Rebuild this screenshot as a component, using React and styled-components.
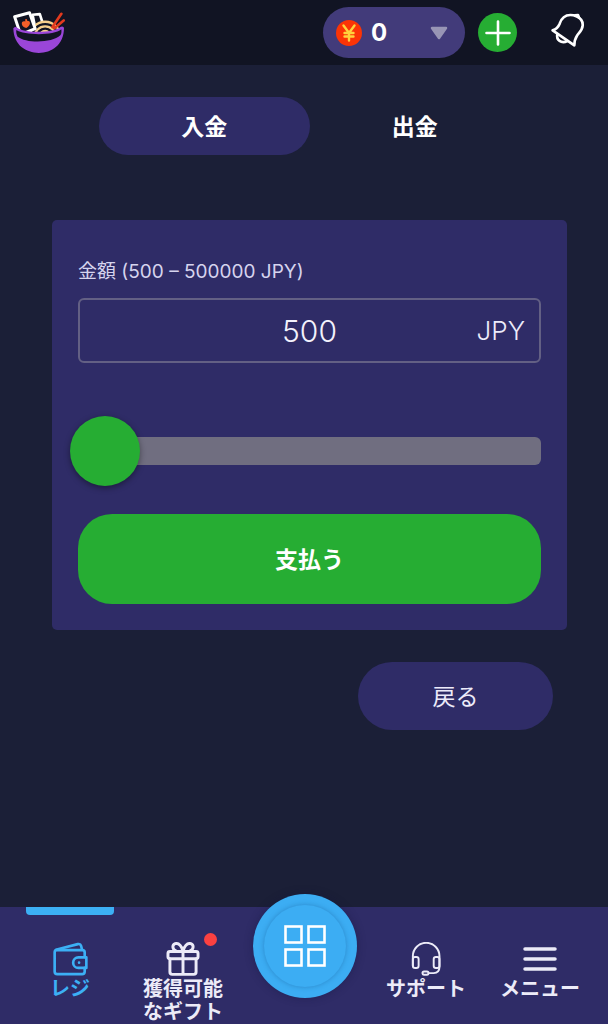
import React, { useState } from "react";
import styled, { createGlobalStyle, css } from "styled-components";

const GlobalStyle = createGlobalStyle`
  * {
    box-sizing: border-box;
  }

  body {
    margin: 0;
    background: #1b1f37;
    color: #ffffff;
    font-family: Inter, "Noto Sans CJK JP", sans-serif;
  }

  button,
  input {
    font-family: inherit;
    color: inherit;
  }

  svg {
    display: block;
  }
`;

const Page = styled.div`
  display: flex;
  flex-direction: column;
  min-height: 100vh;
`;

const Header = styled.header`
  display: flex;
  align-items: center;
  height: 65px;
  padding: 0 23px 0 12px;
  background: #111423;
`;

const LogoLink = styled.a`
  margin-right: auto;
`;

const Balance = styled.button`
  display: flex;
  align-items: center;
  width: 142px;
  height: 51px;
  padding: 0 17px 0 13px;
  border: none;
  border-radius: 26px;
  background: #423b7a;
  font-size: 24px;
  font-weight: 700;
  cursor: pointer;
`;

const Amount = styled.span`
  margin: 0 auto 0 9px;
`;

const AddButton = styled.button`
  display: grid;
  place-items: center;
  width: 39px;
  height: 39px;
  margin: 0 34px 0 13px;
  padding: 0;
  border: none;
  border-radius: 50%;
  background: #26ad33;
  cursor: pointer;
`;

const BellButton = styled.button`
  padding: 0;
  border: none;
  background: none;
  cursor: pointer;
`;

const Main = styled.main`
  display: flex;
  flex-direction: column;
  flex: 1;
  padding: 32px 41px 32px 52px;
`;

const Tabs = styled.div`
  display: flex;
  padding: 0 47px;
`;

const Tab = styled.button`
  flex: 1;
  height: 58px;
  padding: 0 0 3px;
  border: none;
  border-radius: 29px;
  background: ${({ $active }) => ($active ? "#2f2c67" : "transparent")};
  font-size: 23px;
  font-weight: 700;
  cursor: pointer;
`;

const Card = styled.form`
  display: flex;
  flex-direction: column;
  margin-top: 65px;
  padding: 38px 26px 26px;
  border-radius: 5px;
  background: #2f2c67;
`;

const Label = styled.label`
  color: #d6d4ee;
  font-size: 19px;
  line-height: 28px;
`;

const Field = styled.div`
  display: grid;
  grid-template-columns: 80px 1fr 80px;
  align-items: center;
  height: 65px;
  margin-top: 12px;
  padding: 0 14px;
  border: 2px solid #636084;
  border-radius: 6px;
`;

const AmountInput = styled.input`
  grid-column: 2;
  width: 100%;
  padding: 0;
  border: none;
  outline: none;
  background: none;
  color: #f3f2fc;
  font-size: 30px;
  font-weight: 300;
  text-align: center;
`;

const Currency = styled.span`
  color: #ecebfa;
  font-size: 26px;
  font-weight: 300;
  text-align: right;
`;

const Slider = styled.input`
  appearance: none;
  width: calc(100% + 8px);
  height: 70px;
  margin: 53px 0 28px -8px;
  background: none;
  cursor: pointer;

  &::-webkit-slider-runnable-track {
    height: 28px;
    border-radius: 6px;
    background: linear-gradient(to right, transparent 8px, #706e80 8px);
  }

  &::-webkit-slider-thumb {
    appearance: none;
    width: 70px;
    height: 70px;
    margin-top: -21px;
    border: none;
    border-radius: 50%;
    background: #26ad33;
    box-shadow: 0 2px 6px rgba(0, 0, 0, 0.4);
  }
`;

const PayButton = styled.button`
  height: 90px;
  padding: 0 0 3px;
  border: none;
  border-radius: 34px;
  background: #26ad33;
  font-size: 23px;
  font-weight: 700;
  cursor: pointer;
`;

const BackButton = styled.button`
  align-self: flex-end;
  width: 195px;
  height: 68px;
  margin: 32px 14px 0 0;
  padding: 0 0 3px;
  border: none;
  border-radius: 34px;
  background: #2f2c67;
  color: #ecebfa;
  font-size: 23px;
  cursor: pointer;
`;

const Nav = styled.nav`
  display: grid;
  grid-template-columns: 92fr 134fr 110fr 132fr 96fr;
  padding: 0 20px 0 24px;
  background: #2f2c67;
`;

const NavItem = styled.a`
  position: relative;
  display: flex;
  flex-direction: column;
  align-items: center;
  gap: 2px;
  min-height: 117px;
  padding-top: 35px;
  color: #ecebf8;
  font-size: 20px;
  font-weight: 700;
  line-height: 23px;
  text-align: center;
  text-decoration: none;

  ${({ $active }) =>
    $active &&
    css`
      color: #3cb0f5;

      &::before {
        content: "";
        position: absolute;
        top: 0;
        left: 2px;
        right: 2px;
        height: 8px;
        border-radius: 0 0 4px 4px;
        background: #3cb0f5;
      }
    `}
`;

const IconBox = styled.span`
  position: relative;
`;

const Dot = styled.span`
  position: absolute;
  top: -9px;
  right: -17px;
  width: 13px;
  height: 13px;
  border-radius: 50%;
  background: #fb4141;
`;

const GamesButton = styled.button`
  display: grid;
  place-items: center;
  justify-self: center;
  width: 104px;
  height: 104px;
  margin-top: -13px;
  padding: 0;
  border: none;
  border-radius: 50%;
  background: #3cadf3;
  box-shadow: 0 0 8px rgba(20, 20, 60, 0.4);
  cursor: pointer;
`;

const GamesInner = styled.span`
  display: grid;
  place-items: center;
  width: 82px;
  height: 82px;
  border-radius: 50%;
  box-shadow: 0 0 5px rgba(20, 80, 140, 0.4);
`;

const Logo = () => (
  <svg width="53" height="44" viewBox="36 34 160 132" fill="none">
    <path d="M98 45l22-2 12 38-24 12z" fill="#111423" stroke="#fff" strokeWidth="8" strokeLinejoin="round" />
    <path d="M90 112a46 46 0 0 1 92 0z" fill="#111423" />
    <path
      d="M90 112a46 46 0 0 1 92 0M104 112a32 32 0 0 1 64 0M120 110a16 16 0 0 1 32 0"
      stroke="#f6cf8c"
      strokeWidth="7"
    />
    <path d="M44 51l45-12 17 48-44 18z" fill="#111423" stroke="#fff" strokeWidth="9" strokeLinejoin="round" />
    <path d="M76 59c4-4 7 1 6 5 8-2 10 5 7 11-2 4-7 8-10 10-6-2-12-5-13-11-2-7 3-11 10-9z" fill="#f4602a" />
    <path d="M158 82l27-40M164 86l28-24" stroke="#e23a1e" strokeWidth="8" strokeLinecap="round" />
    <path d="M40 86c4-5 8-5 12-2 20 17 110 17 130-2 4-3 8-2 11 2 0 52-38 76-76 76s-76-22-77-74z" fill="#9a46d8" />
    <path d="M49 91c24 16 112 18 136-2 1 9 0 15-3 18-26 24-104 24-129 4-3-5-5-12-4-20z" fill="#111423" />
  </svg>
);

const Coin = () => (
  <svg width="26" height="26" viewBox="0 0 26 26">
    <circle cx="13" cy="13" r="13" fill="#fb3406" />
    <path
      d="M7.500 5.500l5.500 7.500 5.500-7.500M13 13v7.500M8.500 13h9M8.500 16.500h9"
      fill="none"
      stroke="#ffd23c"
      strokeWidth="2.400"
      strokeLinecap="round"
    />
  </svg>
);

const Arrow = () => (
  <svg width="18" height="14" viewBox="0 0 18 14">
    <path d="M2 2h14l-7 10z" fill="#9895b5" stroke="#9895b5" strokeWidth="2.500" strokeLinejoin="round" />
  </svg>
);

const Plus = () => (
  <svg width="26" height="26" viewBox="0 0 26 26">
    <path d="M13 1.500v23M1.500 13h23" stroke="#fff" strokeWidth="2.600" strokeLinecap="round" />
  </svg>
);

const Bell = () => (
  <svg
    width="34"
    height="40"
    viewBox="0 0 102 120"
    fill="none"
    stroke="#fff"
    strokeWidth="8"
    strokeLinecap="round"
    strokeLinejoin="round"
  >
    <path d="M5 52c12-4 17-10 21-20C32 14 44 6 58 6c6 0 12 1 18 4 14 6 20 16 19 28-1 14-10 20-17 30-6 9-8 17-8 29z" />
    <path d="M72 7l9-1 3 8" />
    <path d="M19 63c-4 18 12 30 30 21" />
  </svg>
);

const Wallet = () => (
  <svg
    width="35"
    height="34"
    viewBox="156 157 106 102"
    fill="none"
    stroke="currentColor"
    strokeWidth="8"
    strokeLinecap="round"
    strokeLinejoin="round"
  >
    <path d="M252 202v-14q0-7-7-7h-78q-6 0-6 7v58q0 8 8 8h75q8 0 8-8v-11" />
    <path d="M165 180l66-17q8-2 10 5l3 12" />
    <path d="M257 203h-24a16 16 0 0 0 0 32h24z" />
    <circle cx="235" cy="219" r="4" fill="currentColor" stroke="none" />
  </svg>
);

const Gift = () => (
  <svg
    width="34"
    height="34"
    viewBox="498 156 104 104"
    fill="none"
    stroke="currentColor"
    strokeWidth="9"
    strokeLinecap="round"
    strokeLinejoin="round"
  >
    <rect x="504" y="185" width="92" height="22" rx="6" />
    <path d="M510 208v40q0 7 7 7h66q7 0 7-7v-40M550 185v70" />
    <path d="M550 184c-3-15-13-26-24-23-10 4-9 17 2 22M550 184c3-15 13-26 24-23 10 4 9 17-2 22" />
  </svg>
);

const Headset = () => (
  <svg
    width="34"
    height="34"
    viewBox="117 124 102 106"
    fill="none"
    stroke="currentColor"
    strokeWidth="6"
    strokeLinecap="round"
    strokeLinejoin="round"
  >
    <path d="M127 198v-30a41 41 0 0 1 83 0v33q0 19-18 20h-16" />
    <rect x="127" y="171" width="18" height="34" rx="7" />
    <rect x="192" y="171" width="18" height="34" rx="7" />
    <rect x="157" y="216" width="19" height="10" rx="5" />
  </svg>
);

const Bars = () => (
  <svg width="34" height="34" viewBox="0 0 34 34">
    <path d="M2 7h30M2 17h30M2 27h30" stroke="currentColor" strokeWidth="3.500" strokeLinecap="round" />
  </svg>
);

const Squares = () => (
  <svg width="44" height="44" viewBox="0 0 44 44" fill="none" stroke="#fff" strokeWidth="2.600">
    <rect x="2.500" y="2.500" width="16" height="16" />
    <rect x="25.500" y="2.500" width="16" height="16" />
    <rect x="2.500" y="25.500" width="16" height="16" />
    <rect x="25.500" y="25.500" width="16" height="16" />
  </svg>
);

const MIN = 500;
const MAX = 500000;

const App = () => {
  const [tab, setTab] = useState("deposit");
  const [amount, setAmount] = useState(MIN);

  const handleAmount = (e) => setAmount(e.target.value);

  return (
    <>
      <GlobalStyle />
      <Page>
        <Header>
          <LogoLink href="#" aria-label="ホーム">
            <Logo />
          </LogoLink>
          <Balance type="button">
            <Coin />
            <Amount>0</Amount>
            <Arrow />
          </Balance>
          <AddButton type="button" aria-label="入金する">
            <Plus />
          </AddButton>
          <BellButton type="button" aria-label="お知らせ">
            <Bell />
          </BellButton>
        </Header>

        <Main>
          <Tabs>
            <Tab type="button" $active={tab === "deposit"} onClick={() => setTab("deposit")}>
              入金
            </Tab>
            <Tab type="button" $active={tab === "withdraw"} onClick={() => setTab("withdraw")}>
              出金
            </Tab>
          </Tabs>

          <Card onSubmit={(e) => e.preventDefault()}>
            <Label htmlFor="amount">金額 (500 – 500000 JPY)</Label>
            <Field>
              <AmountInput id="amount" type="text" inputMode="numeric" value={amount} onChange={handleAmount} />
              <Currency>JPY</Currency>
            </Field>
            <Slider type="range" aria-label="金額" min={MIN} max={MAX} value={amount} onChange={handleAmount} />
            <PayButton type="submit">支払う</PayButton>
          </Card>

          <BackButton type="button">戻る</BackButton>
        </Main>

        <Nav>
          <NavItem href="#cashier" $active>
            <IconBox>
              <Wallet />
            </IconBox>
            レジ
          </NavItem>
          <NavItem href="#gifts">
            <IconBox>
              <Gift />
              <Dot />
            </IconBox>
            <span>
              獲得可能
              <br />
              なギフト
            </span>
          </NavItem>
          <GamesButton type="button" aria-label="ゲーム">
            <GamesInner>
              <Squares />
            </GamesInner>
          </GamesButton>
          <NavItem href="#support">
            <IconBox>
              <Headset />
            </IconBox>
            サポート
          </NavItem>
          <NavItem href="#menu">
            <IconBox>
              <Bars />
            </IconBox>
            メニュー
          </NavItem>
        </Nav>
      </Page>
    </>
  );
};

export default App;
